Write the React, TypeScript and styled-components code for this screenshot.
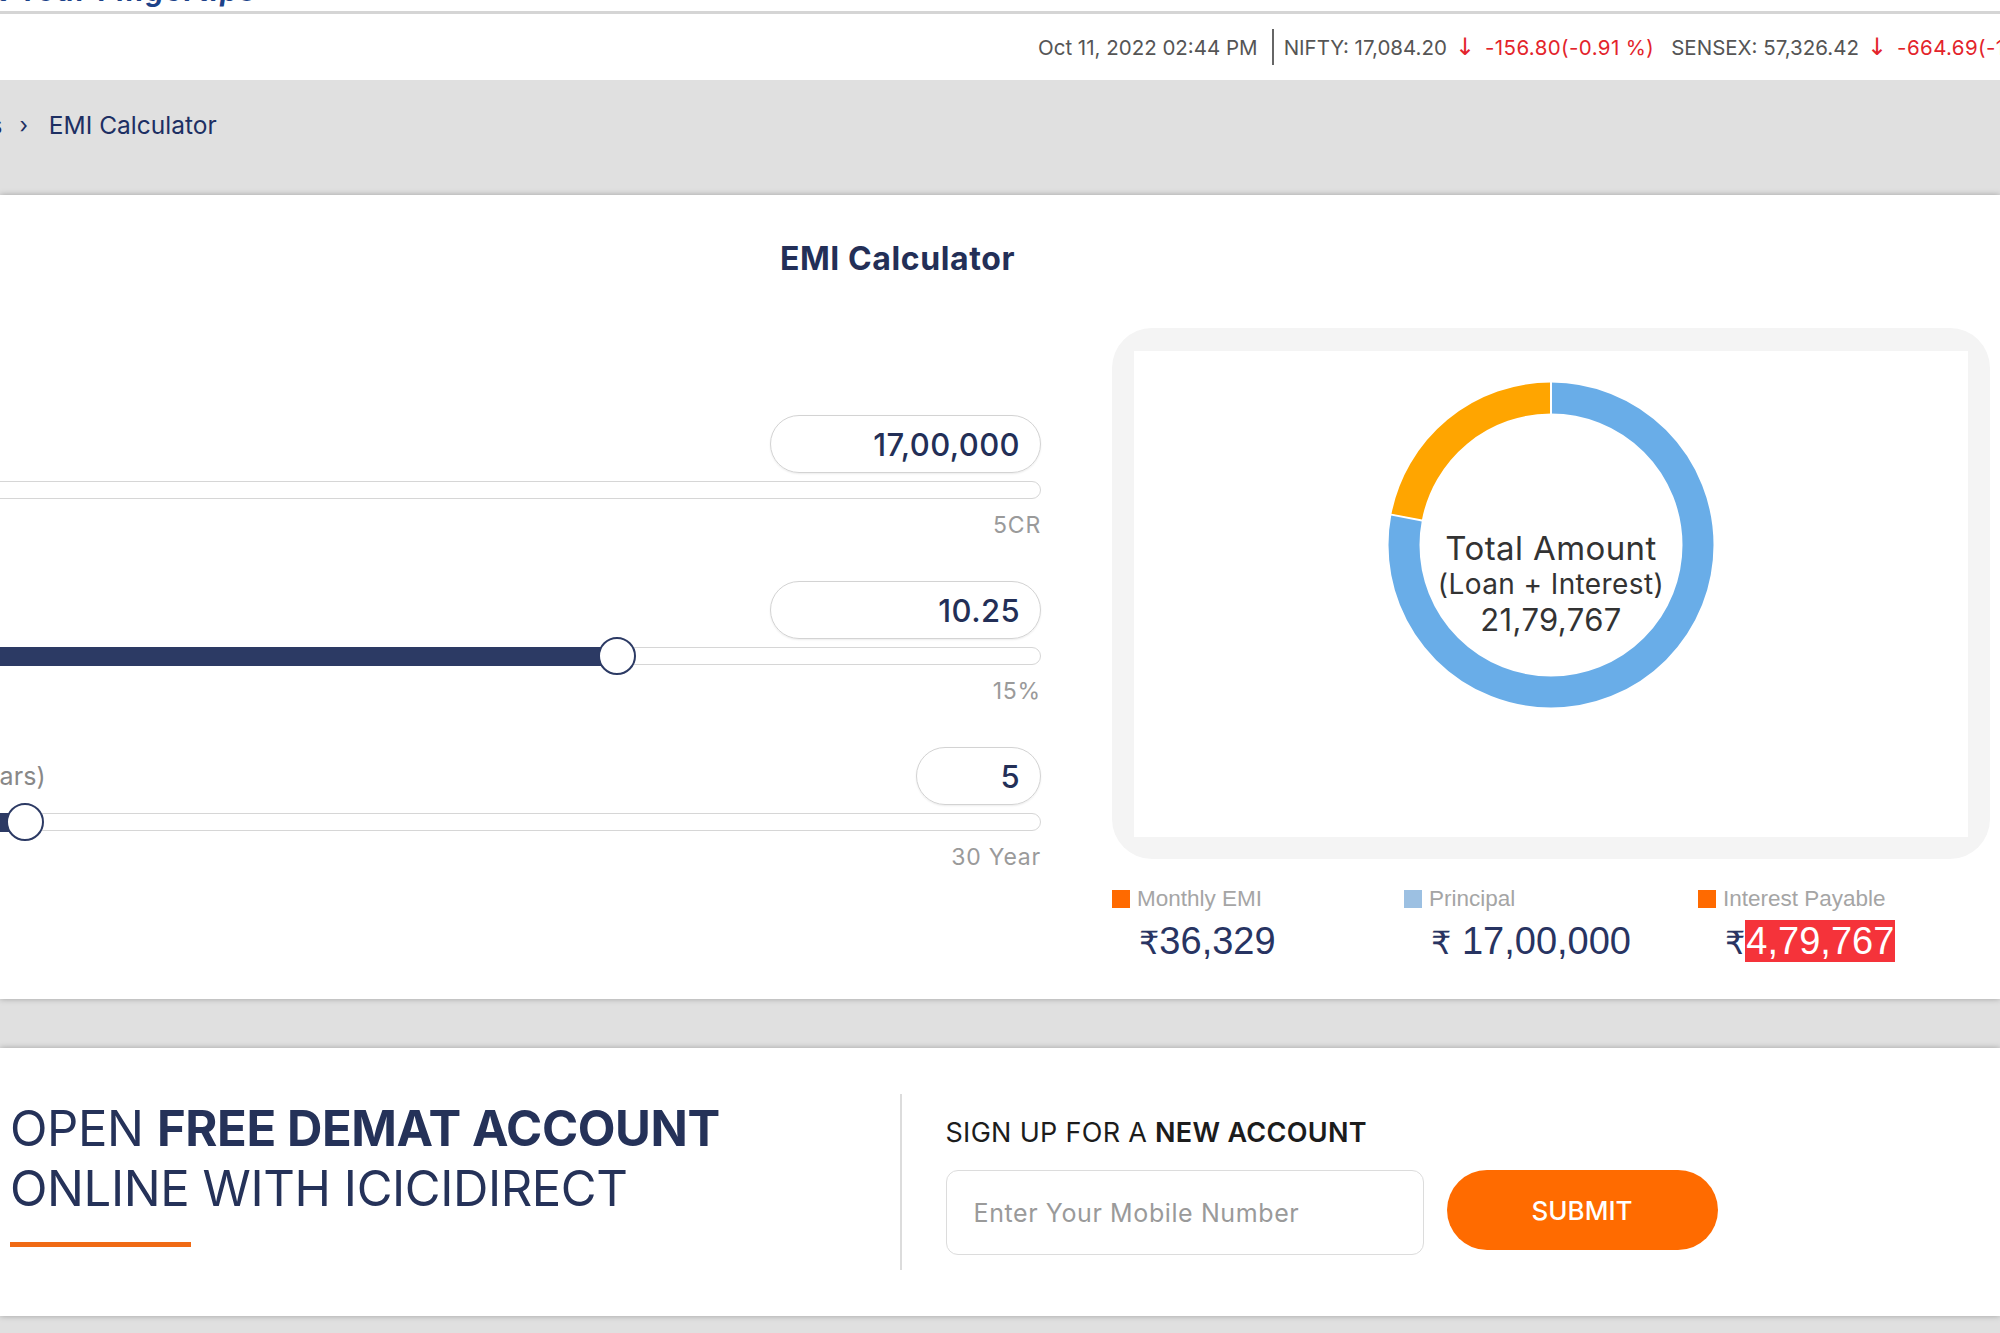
import React from 'react';
import styled, { createGlobalStyle } from 'styled-components';

const FONT = `'Inter', 'Noto Sans', sans-serif`;
const NAVY = '#232f57';

const GlobalStyle = createGlobalStyle`
  html, body {
    margin: 0;
    padding: 0;
    background: #e0e0e0;
    overflow: hidden;
    font-family: ${FONT};
  }
  * { box-sizing: border-box; }
`;

const Page = styled.div`
  width: 2000px;
  height: 1333px;
  overflow: hidden;
  background: #e0e0e0;
`;

const TopStrip = styled.div`
  height: 14px;
  background: #fff;
  border-bottom: 3px solid #d5d5d5;
  overflow: hidden;
`;

const Tagline = styled.div`
  margin: -26px 0 0 -175px;
  font-size: 28px;
  font-weight: 700;
  font-style: italic;
  color: #1d4289;
  white-space: nowrap;
  letter-spacing: 2px;
`;

const Ticker = styled.div`
  height: 66px;
  background: #fff;
  display: flex;
  align-items: center;
  padding-left: 1038px;
  white-space: nowrap;
  font-size: 20.5px;
  color: #555;
`;

const TickDivider = styled.span`
  display: block;
  flex: none;
  width: 2px;
  height: 36px;
  background: #666;
  margin: 0 10px 0 14px;
`;

const Quote = styled.span`
  margin-right: 17px;
`;

const Change = styled.span`
  color: #e3242b;
  letter-spacing: 0.4px;
`;

const Arrow = styled.span`
  color: #e3242b;
  margin: 0 10px 0 8px;
  font-family: 'DejaVu Sans', sans-serif;
  font-size: 24px;
`;

const Breadcrumb = styled.div`
  height: 115px;
  display: flex;
  align-items: flex-start;
  padding-top: 29px;
  font-size: 24.5px;
  line-height: 32px;
  color: #1d2f63;
  white-space: nowrap;
`;

const CrumbPrev = styled.span`
  margin-left: -128px;
`;

const CrumbSep = styled.span`
  margin: 0 21px 0 17px;
  font-size: 22px;
`;

const Card = styled.section`
  position: relative;
  background: #fff;
  height: 804px;
  box-shadow: 0 0 6px rgba(0, 0, 0, 0.28);
  overflow: hidden;
`;

const CardInner = styled.div`
  margin-left: -195px;
  width: 2185px;
  padding-top: 44px;
`;

const Heading = styled.h1`
  margin: 0;
  text-align: center;
  font-size: 32px;
  line-height: 40px;
  font-weight: 700;
  letter-spacing: 0.6px;
  color: ${NAVY};
`;

const CalcGrid = styled.div`
  display: grid;
  grid-template-columns: 1236px 878px;
  column-gap: 71px;
  margin-top: 49px;
`;

const SliderCol = styled.div`
  display: flex;
  flex-direction: column;
  gap: 43px;
  padding-top: 87px;
`;

const SliderRow = styled.div``;

const RowHead = styled.div`
  display: flex;
  justify-content: space-between;
  align-items: center;
`;

const FieldLabel = styled.span`
  font-size: 25px;
  letter-spacing: 0.1px;
  color: #888;
`;

const ValueBox = styled.div<{ $w: number }>`
  width: ${(p) => p.$w}px;
  height: 58px;
  border: 1.5px solid #d3d3d3;
  border-radius: 30px;
  box-shadow: 0 1px 2px rgba(0, 0, 0, 0.08);
  display: flex;
  align-items: center;
  justify-content: flex-end;
  padding-right: 20px;
  font-size: 31px;
  font-weight: 500;
  letter-spacing: 0.4px;
  color: ${NAVY};
`;

const Track = styled.div`
  position: relative;
  margin-top: 8px;
  height: 18px;
  border: 1.5px solid #d6d6d6;
  border-radius: 10px;
  background: #fff;
`;

const TrackFill = styled.div`
  position: absolute;
  left: -2px;
  top: -1.5px;
  bottom: -1.5px;
  background: #2c3a64;
  border-radius: 10px 0 0 10px;
`;

const Thumb = styled.div`
  position: absolute;
  top: 50%;
  width: 38px;
  height: 38px;
  margin-left: -19px;
  transform: translateY(-50%);
  border-radius: 50%;
  background: #fff;
  border: 2px solid #2c3a64;
`;

const Limits = styled.div`
  display: flex;
  justify-content: space-between;
  margin-top: 13px;
  font-size: 23px;
  line-height: 26px;
  letter-spacing: 0.8px;
  color: #9a9a9a;
`;

const ChartCol = styled.div``;

const ChartCard = styled.div`
  height: 531px;
  background: #f4f4f4;
  border-radius: 40px;
  padding: 23px 22px;
`;

const ChartInner = styled.div`
  height: 486px;
  background: #fff;
  display: flex;
  justify-content: center;
  padding-top: 31px;
`;

const Donut = styled.div`
  position: relative;
  width: 326px;
  height: 326px;
`;

const DonutLabel = styled.div`
  position: absolute;
  inset: 0;
  display: flex;
  flex-direction: column;
  align-items: center;
  justify-content: center;
  padding-top: 78px;
  color: #333;
  text-align: center;
  white-space: nowrap;
`;

const DonutTitle = styled.div<{ $size: number }>`
  font-size: ${(p) => p.$size}px;
  line-height: 36px;
  letter-spacing: 0.4px;
`;

const Legend = styled.div`
  display: grid;
  grid-template-columns: 292px 294px auto;
  margin-top: 27px;
  font-family: 'Liberation Sans', Arial, sans-serif;
`;

const LegendItem = styled.div``;

const LegendHead = styled.div`
  display: flex;
  align-items: center;
  gap: 7px;
  font-size: 22.5px;
  color: #a5a5a5;
`;

const Swatch = styled.span<{ $color: string }>`
  width: 18px;
  height: 18px;
  background: ${(p) => p.$color};
`;

const LegendValue = styled.div`
  margin-top: 4px;
  padding-left: 27px;
  font-size: 38px;
  line-height: 51px;
  color: #283462;
  white-space: nowrap;
`;

const Rupee = styled.span`
  font-family: 'DejaVu Sans', sans-serif;
  font-size: 32px;
`;

const Highlight = styled.span`
  background: #f5333a;
  color: #fff;
  padding: 0 1px;
`;

const GapBand = styled.div`
  height: 49px;
`;

const Promo = styled.section`
  position: relative;
  height: 268px;
  background: #fff;
  box-shadow: 0 0 6px rgba(0, 0, 0, 0.28);
  display: flex;
  align-items: flex-start;
  padding: 46px 0 0 10px;
`;

const PromoLeft = styled.div`
  width: 890px;
  margin-top: 5px;
`;

const PromoTitle = styled.h2`
  margin: 0;
  font-size: 49px;
  line-height: 60px;
  font-weight: 400;
  color: #253259;
  white-space: nowrap;
  letter-spacing: -0.4px;

  b {
    font-weight: 700;
  }
`;

const Underline = styled.div`
  width: 181px;
  height: 5px;
  background: #f06a14;
  margin-top: 23px;
`;

const PromoDivider = styled.div`
  width: 1.5px;
  height: 176px;
  background: #dcdcdc;
`;

const SignUp = styled.div`
  margin: 22px 0 0 44px;
`;

const SignUpTitle = styled.div`
  font-size: 27px;
  letter-spacing: 0.3px;
  color: #1c1c1c;

  b {
    font-weight: 600;
  }
`;

const SignUpRow = styled.div`
  display: flex;
  gap: 23px;
  margin-top: 21px;
`;

const MobileInput = styled.input`
  width: 478px;
  height: 85px;
  border: 1.5px solid #dcdcdc;
  border-radius: 12px;
  padding: 0 27px;
  font-family: ${FONT};
  font-size: 25px;
  letter-spacing: 0.6px;
  color: #333;
  outline: none;

  &::placeholder {
    color: #9a9a9a;
  }
`;

const SubmitButton = styled.button`
  width: 271px;
  height: 80px;
  border: none;
  border-radius: 40px;
  background: #ff6b00;
  color: #fff;
  font-family: ${FONT};
  font-size: 26px;
  font-weight: 500;
`;

type SliderSpec = {
  label: string;
  value: string;
  boxWidth: number;
  min: string;
  max: string;
  ratio: number;
};

const sliders: SliderSpec[] = [
  { label: 'Loan Amount', value: '17,00,000', boxWidth: 271, min: '1L', max: '5CR', ratio: (1700000 - 100000) / (50000000 - 100000) },
  { label: 'Interest Rate', value: '10.25', boxWidth: 271, min: '1%', max: '15%', ratio: (10.25 - 1) / 14 },
  { label: 'Loan Tenure (Years)', value: '5', boxWidth: 125, min: '0', max: '30 Year', ratio: 5 / 30 },
];

const TRACK_W = 1236;
const THUMB = 38;

const DonutChart = () => {
  const r = 147;
  const c = 2 * Math.PI * r;
  const interest = 479767 / 2179767;
  const principal = 1 - interest;
  const sep = (angle: number) => {
    const a = ((angle - 90) * Math.PI) / 180;
    return {
      x1: 163 + 130 * Math.cos(a),
      y1: 163 + 130 * Math.sin(a),
      x2: 163 + 164 * Math.cos(a),
      y2: 163 + 164 * Math.sin(a),
    };
  };
  return (
    <svg width="326" height="326" viewBox="0 0 326 326">
      <g transform="rotate(-90 163 163)">
        <circle cx="163" cy="163" r={r} fill="none" stroke="#69ade8" strokeWidth="31"
          strokeDasharray={`${principal * c} ${c}`} />
        <circle cx="163" cy="163" r={r} fill="none" stroke="#ffa500" strokeWidth="31"
          strokeDasharray={`${interest * c} ${c}`} strokeDashoffset={-principal * c} />
      </g>
      <line {...sep(0)} stroke="#fff" strokeWidth="2" />
      <line {...sep(principal * 360)} stroke="#fff" strokeWidth="2" />
    </svg>
  );
};

const App: React.FC = () => (
  <Page>
    <GlobalStyle />
    <TopStrip>
      <Tagline>Investing at Your Fingertips</Tagline>
    </TopStrip>
    <Ticker>
      <span>Oct 11, 2022 02:44 PM</span>
      <TickDivider />
      <Quote>
        NIFTY: 17,084.20<Arrow>↓</Arrow><Change>-156.80(-0.91 %)</Change>
      </Quote>
      <Quote>
        SENSEX: 57,326.42<Arrow>↓</Arrow><Change>-664.69(-1.15 %)</Change>
      </Quote>
    </Ticker>
    <Breadcrumb>
      <CrumbPrev>Calculators</CrumbPrev>
      <CrumbSep>›</CrumbSep>
      <span>EMI Calculator</span>
    </Breadcrumb>
    <Card>
      <CardInner>
        <Heading>EMI Calculator</Heading>
        <CalcGrid>
          <SliderCol>
            {sliders.map((s) => {
              const pos = THUMB / 2 + s.ratio * (TRACK_W - THUMB);
              return (
                <SliderRow key={s.label}>
                  <RowHead>
                    <FieldLabel>{s.label}</FieldLabel>
                    <ValueBox $w={s.boxWidth}>{s.value}</ValueBox>
                  </RowHead>
                  <Track>
                    <TrackFill style={{ width: pos }} />
                    <Thumb style={{ left: pos }} />
                  </Track>
                  <Limits>
                    <span>{s.min}</span>
                    <span>{s.max}</span>
                  </Limits>
                </SliderRow>
              );
            })}
          </SliderCol>
          <ChartCol>
            <ChartCard>
              <ChartInner>
                <Donut>
                  <DonutChart />
                  <DonutLabel>
                    <DonutTitle $size={33}>Total Amount</DonutTitle>
                    <DonutTitle $size={28}>(Loan + Interest)</DonutTitle>
                    <DonutTitle $size={31}>21,79,767</DonutTitle>
                  </DonutLabel>
                </Donut>
              </ChartInner>
            </ChartCard>
            <Legend>
              <LegendItem>
                <LegendHead><Swatch $color="#ff6a00" />Monthly EMI</LegendHead>
                <LegendValue><Rupee>₹</Rupee>36,329</LegendValue>
              </LegendItem>
              <LegendItem>
                <LegendHead><Swatch $color="#9cc0e2" />Principal</LegendHead>
                <LegendValue><Rupee>₹</Rupee> 17,00,000</LegendValue>
              </LegendItem>
              <LegendItem>
                <LegendHead><Swatch $color="#ff6a00" />Interest Payable</LegendHead>
                <LegendValue><Rupee>₹</Rupee><Highlight>4,79,767</Highlight></LegendValue>
              </LegendItem>
            </Legend>
          </ChartCol>
        </CalcGrid>
      </CardInner>
    </Card>
    <GapBand />
    <Promo>
      <PromoLeft>
        <PromoTitle>
          OPEN <b>FREE DEMAT ACCOUNT</b>
          <br />
          ONLINE WITH ICICIDIRECT
        </PromoTitle>
        <Underline />
      </PromoLeft>
      <PromoDivider />
      <SignUp>
        <SignUpTitle>
          SIGN UP FOR A <b>NEW ACCOUNT</b>
        </SignUpTitle>
        <SignUpRow>
          <MobileInput placeholder="Enter Your Mobile Number" />
          <SubmitButton>SUBMIT</SubmitButton>
        </SignUpRow>
      </SignUp>
    </Promo>
  </Page>
);

export default App;
